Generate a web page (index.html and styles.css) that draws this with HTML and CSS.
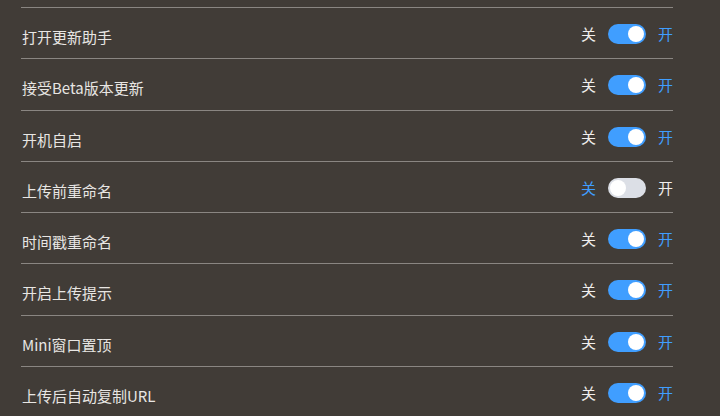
FILE: index.html
```html
<!DOCTYPE html>
<html lang="zh-CN">
<head>
    <meta charset="UTF-8">
    <title>设置</title>
    <link rel="stylesheet" href="styles.css">
</head>
<body>

    <div class="settings-list">
        <div class="setting-item">
            <span class="setting-label">打开更新助手</span>
            <div class="switch is-on"><span class="switch-text off">关</span><span class="switch-core"></span><span class="switch-text on">开</span></div>
        </div>
        <div class="setting-item">
            <span class="setting-label">接受Beta版本更新</span>
            <div class="switch is-on"><span class="switch-text off">关</span><span class="switch-core"></span><span class="switch-text on">开</span></div>
        </div>
        <div class="setting-item">
            <span class="setting-label">开机自启</span>
            <div class="switch is-on"><span class="switch-text off">关</span><span class="switch-core"></span><span class="switch-text on">开</span></div>
        </div>
        <div class="setting-item">
            <span class="setting-label">上传前重命名</span>
            <div class="switch"><span class="switch-text off">关</span><span class="switch-core"></span><span class="switch-text on">开</span></div>
        </div>
        <div class="setting-item">
            <span class="setting-label">时间戳重命名</span>
            <div class="switch is-on"><span class="switch-text off">关</span><span class="switch-core"></span><span class="switch-text on">开</span></div>
        </div>
        <div class="setting-item">
            <span class="setting-label">开启上传提示</span>
            <div class="switch is-on"><span class="switch-text off">关</span><span class="switch-core"></span><span class="switch-text on">开</span></div>
        </div>
        <div class="setting-item">
            <span class="setting-label">Mini窗口置顶</span>
            <div class="switch is-on"><span class="switch-text off">关</span><span class="switch-core"></span><span class="switch-text on">开</span></div>
        </div>
        <div class="setting-item">
            <span class="setting-label">上传后自动复制URL</span>
            <div class="switch is-on"><span class="switch-text off">关</span><span class="switch-core"></span><span class="switch-text on">开</span></div>
        </div>
    </div>

</body>
</html>
```

FILE: styles.css
```css
/* Page */
body {
    margin: 0;
    background-color: #413c37;
    font-family: "Noto Sans CJK SC", "Noto Sans", sans-serif;
    font-size: 14px;
    color: #e8e6e3;
    overflow: hidden;
}

/* List */
.settings-list {
    margin: 7px 47px 0 21px;
}

.setting-item {
    display: flex;
    justify-content: space-between;
    align-items: flex-start;
    height: 51.3px;
    box-sizing: border-box;
    border-top: 1px solid #8a8682;
}

.setting-label {
    padding: 20px 0 0 1px;
    font-size: 15px;
    line-height: 18px;
}

/* Switch */
.switch {
    display: flex;
    align-items: center;
    margin-top: 16px;
    height: 20px;
}

.switch-text {
    line-height: 20px;
    font-size: 15px;
    color: #f0eeec;
}

.switch-text.off {
    margin-right: 12px;
}

.switch-text.on {
    margin-left: 12px;
}

.switch-core {
    position: relative;
    width: 38px;
    height: 20px;
    border-radius: 10px;
    background-color: #dcdfe6;
}

.switch-core::after {
    content: "";
    position: absolute;
    top: 2px;
    left: 2px;
    width: 16px;
    height: 16px;
    border-radius: 50%;
    background-color: #fff;
}

.switch.is-on .switch-core {
    background-color: #409eff;
}

.switch.is-on .switch-core::after {
    left: 20px;
}

.switch.is-on .switch-text.on,
.switch:not(.is-on) .switch-text.off {
    color: #409eff;
}
```
